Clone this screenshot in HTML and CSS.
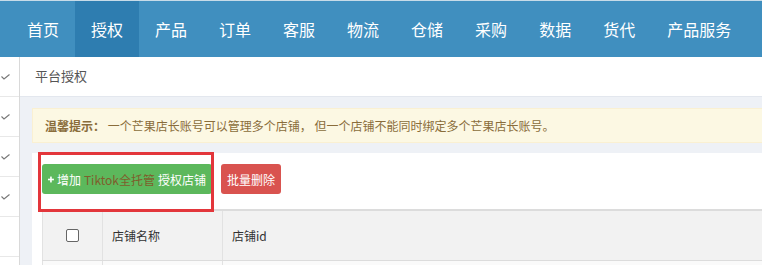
FILE: index.html
```html
<!DOCTYPE html>
<html lang="zh-CN">
<head>
<meta charset="utf-8">
<title>平台授权</title>
<link rel="stylesheet" href="styles.css">
</head>
<body>
<header class="topnav">
  <nav class="menu">
    <a class="menu-item">首页</a>
    <a class="menu-item active">授权</a>
    <a class="menu-item">产品</a>
    <a class="menu-item">订单</a>
    <a class="menu-item">客服</a>
    <a class="menu-item">物流</a>
    <a class="menu-item">仓储</a>
    <a class="menu-item">采购</a>
    <a class="menu-item">数据</a>
    <a class="menu-item">货代</a>
    <a class="menu-item">产品服务</a>
  </nav>
</header>
<div class="layout">
  <aside class="sidebar">
    <div class="side-row"><svg class="chk" viewBox="0 0 9 6" width="9" height="6"><polyline points="0.5,2.5 3,5 8.5,0.5"/></svg></div>
    <div class="side-row"><svg class="chk" viewBox="0 0 9 6" width="9" height="6"><polyline points="0.5,2.5 3,5 8.5,0.5"/></svg></div>
    <div class="side-row"><svg class="chk" viewBox="0 0 9 6" width="9" height="6"><polyline points="0.5,2.5 3,5 8.5,0.5"/></svg></div>
    <div class="side-row"><svg class="chk" viewBox="0 0 9 6" width="9" height="6"><polyline points="0.5,2.5 3,5 8.5,0.5"/></svg></div>
    <div class="side-row"></div>
  </aside>
  <main class="main">
    <div class="crumb">平台授权</div>
    <div class="content">
      <div class="alert"><b>温馨提示：</b> 一个芒果店长账号可以管理多个店铺， 但一个店铺不能同时绑定多个芒果店长账号。</div>
      <section class="panel">
        <div class="toolbar">
          <button class="btn btn-green"><svg class="plus" viewBox="0 0 11 11" width="11" height="11"><rect x="4" y="0" width="3" height="11"/><rect x="0" y="4" width="11" height="3"/></svg>增加 <span class="hl">Tiktok全托管</span> 授权店铺</button>
          <button class="btn btn-red">批量删除</button>
        </div>
        <div class="mark"></div>
        <table class="grid">
          <thead>
            <tr>
              <th class="c-check"><input type="checkbox" class="cb"></th>
              <th class="c-name">店铺名称</th>
              <th class="c-id">店铺id</th>
            </tr>
          </thead>
          <tbody>
            <tr><td class="c-check"></td><td></td><td></td></tr>
          </tbody>
        </table>
      </section>
    </div>
  </main>
</div>
</body>
</html>
```
FILE: styles.css
```css
* { box-sizing: border-box; }
html, body { margin: 0; padding: 0; }
body {
  width: 762px;
  height: 265px;
  overflow: hidden;
  font-family: "Noto Sans CJK SC", "Microsoft YaHei", sans-serif;
  color: #333;
  background: #eef1f6;
}
.topnav {
  height: 57px;
  background: #408fbf;
  border-top: 1px solid #c7dbe8;
  overflow: hidden;
}
.menu {
  display: flex;
  height: 56px;
  padding-left: 11px;
}
.menu-item {
  display: block;
  padding: 0 16px;
  line-height: 56px;
  font-size: 16px;
  color: #fff;
  white-space: nowrap;
}
.menu-item.active { background: #2e7db0; }

.layout {
  display: flex;
  height: 208px;
  overflow: hidden;
}
.sidebar {
  width: 20px;
  flex: none;
  background: #fff;
  border-right: 1px solid #d9d9d9;
}
.side-row {
  height: 40px;
  border-bottom: 1px solid #e8e8e8;
  display: flex;
  align-items: center;
  padding-left: 1px;
}
.chk { fill: none; stroke: #777; stroke-width: 1.1; }

.main {
  flex: 1;
  min-width: 0;
  display: flex;
  flex-direction: column;
  overflow: hidden;
}
.crumb {
  height: 40px;
  flex: none;
  background: #fff;
  border-bottom: 1px solid #e3e7ee;
  padding-left: 15px;
  font-size: 13px;
  line-height: 38px;
  color: #555;
}
.content {
  flex: 1;
  min-height: 0;
  padding: 11px 0 0 12px;
  overflow: hidden;
}
.alert {
  height: 35px;
  background: #fcf8e3;
  border: 1px solid #faf0d2;
  border-right: none;
  padding-left: 12px;
  font-size: 12px;
  line-height: 33px;
  color: #8a6d3b;
  white-space: nowrap;
  overflow: hidden;
}
.alert b { font-weight: bold; }
.panel {
  position: relative;
  margin-top: 10px;
  background: #fff;
  padding: 11px 0 0 10px;
}
.toolbar {
  display: flex;
  gap: 9px;
}
.btn {
  height: 30px;
  border: none;
  border-radius: 3px;
  font-family: inherit;
  font-size: 12px;
  color: #fff;
  padding: 0 6px;
  display: flex;
  align-items: center;
  white-space: nowrap;
}
.btn-green { background: #5cb85c; width: 170px; padding-left: 6px; }
.btn-red { background: #d9534f; width: 60px; justify-content: center; padding: 0; }
.plus { fill: #fff; margin-right: 3px; }
.hl { color: #7f5e2c; margin: 0 3px; }
.mark {
  position: absolute;
  left: 6px;
  top: -1px;
  width: 176px;
  height: 60px;
  border: 3px solid #e3363b;
}
.grid {
  margin-top: 15px;
  width: 100%;
  border-collapse: collapse;
  font-size: 12px;
  table-layout: fixed;
}
.grid th {
  height: 50px;
  background: #f2f2f2;
  border-top: 2px solid #dcdcdc;
  border-bottom: 1px solid #dcdcdc;
  border-left: 1px solid #e2e2e2;
  text-align: left;
  font-weight: normal;
  padding: 0 9px;
  color: #333;
}
.grid td {
  height: 40px;
  border-left: 1px solid #e2e2e2;
  background: #fafafa;
}
.c-check { width: 60px; text-align: center !important; padding: 0 !important; }
.c-name { width: 120px; }
.cb {
  appearance: none;
  -webkit-appearance: none;
  width: 13px;
  height: 13px;
  margin: 4px 0 0 0;
  border: 1px solid #666;
  border-radius: 2px;
  background: #fff;
}
```
